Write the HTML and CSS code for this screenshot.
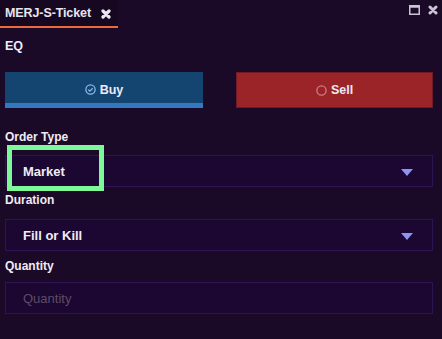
FILE: index.html
```html
<!DOCTYPE html>
<html>
<head>
<meta charset="utf-8">
<link rel="stylesheet" href="styles.css">
</head>
<body>
<div class="panel">
  <div class="header">
    <div class="tab">
      <span class="tab-title">MERJ-S-Ticket</span>
      <svg class="tab-close" width="10" height="10" viewBox="0 0 10 10"><path d="M2 2 L8 8 M8 2 L2 8" stroke="#ece8f2" stroke-width="3.2" stroke-linecap="round"/></svg>
    </div>
    <div class="win-icons">
      <svg width="11" height="10" viewBox="0 0 11 10"><rect x="0.75" y="0.75" width="9.5" height="8.5" fill="none" stroke="#cbc3d6" stroke-width="1.5"/><rect x="0.75" y="0.75" width="9.5" height="2" fill="#cbc3d6"/></svg>
      <svg width="10" height="10" viewBox="0 0 10 10"><path d="M2 2 L8 8 M8 2 L2 8" stroke="#cbc3d6" stroke-width="3" stroke-linecap="round"/></svg>
    </div>
  </div>
  <div class="content">
    <div class="label label-eq">EQ</div>
    <div class="sides">
      <div class="side buy">
        <svg width="11" height="11" viewBox="0 0 11 11"><circle cx="5.5" cy="5.5" r="4.6" fill="none" stroke="#8cb6ea" stroke-width="1.3"/><path d="M3.3 5.7 L4.9 7.1 L7.7 4.2" fill="none" stroke="#8cb6ea" stroke-width="1.3"/></svg>
        <span>Buy</span>
      </div>
      <div class="side sell">
        <svg width="11" height="11" viewBox="0 0 11 11"><circle cx="5.5" cy="5.5" r="4.6" fill="none" stroke="#cf7b86" stroke-width="1.3"/></svg>
        <span>Sell</span>
      </div>
    </div>
    <div class="label label-order">Order Type</div>
    <div class="field select highlight-wrap">
      <span class="value">Market</span>
      <span class="caret"></span>
      <div class="highlight"></div>
    </div>
    <div class="label label-duration">Duration</div>
    <div class="field select select-duration">
      <span class="value">Fill or Kill</span>
      <span class="caret"></span>
    </div>
    <div class="label label-qty">Quantity</div>
    <div class="field input-qty">
      <span class="placeholder">Quantity</span>
    </div>
  </div>
</div>
</body>
</html>
```

FILE: styles.css
```css
* { box-sizing: border-box; }
html, body { margin: 0; padding: 0; }
body {
  width: 442px;
  height: 339px;
  background: #1b0a27;
  font-family: "Liberation Sans", Arial, sans-serif;
  color: #f2eef6;
  overflow: hidden;
}
.header {
  display: flex;
  justify-content: space-between;
  align-items: flex-start;
  height: 28px;
}
.tab {
  display: flex;
  align-items: center;
  gap: 10px;
  height: 28px;
  width: 118px;
  padding-left: 5px;
  background: #170822;
  border-bottom: 2px solid #ea6a3c;
}
.tab-title {
  font-size: 12.5px;
  font-weight: bold;
  color: #e9e4f1;
  letter-spacing: -0.1px;
}
.tab-close { margin-top: 1px; }
.win-icons {
  display: flex;
  gap: 8px;
  padding-top: 5px;
  padding-right: 4px;
}
.content {
  padding: 0 9px 0 5px;
}
.label {
  font-size: 12px;
  font-weight: bold;
  line-height: 16px;
  height: 16px;
  color: #f0ecf5;
}
.label-eq { margin-top: 10px; font-size: 12.5px; }
.sides {
  display: grid;
  grid-template-columns: 198px 197px;
  column-gap: 33px;
  margin-top: 18px;
}
.side {
  height: 36px;
  display: flex;
  align-items: center;
  justify-content: center;
  gap: 4px;
  font-size: 12.5px;
  font-weight: bold;
  color: #eee9f4;
}
.buy {
  background: #144570;
  border-bottom: 5px solid #3479c0;
  padding-top: 4px;
}
.sell {
  background: #9b2428;
  border: 1px solid #6f1a25;
}
.label-order { margin-top: 21px; }
.label-duration { margin-top: 5px; }
.label-qty { margin-top: 7px; }
.field {
  height: 32px;
  background: #1c0632;
  border: 1px solid #2e1450;
  display: flex;
  align-items: center;
  justify-content: space-between;
  padding: 0 19px 0 17px;
  position: relative;
}
.highlight-wrap { margin-top: 10px; }
.select-duration { margin-top: 11px; }
.input-qty { margin-top: 8px; }
.value {
  font-size: 13px;
  font-weight: bold;
  color: #f0ecf5;
}
.placeholder {
  font-size: 13px;
  color: #5b4d68;
}
.caret {
  width: 0;
  height: 0;
  border-left: 6px solid transparent;
  border-right: 6px solid transparent;
  border-top: 7px solid #8f93f3;
  margin-top: 3px;
}
.highlight {
  position: absolute;
  left: 1px;
  top: -11px;
  width: 97px;
  height: 46px;
  border: 5px solid #7dfa97;
}
```
